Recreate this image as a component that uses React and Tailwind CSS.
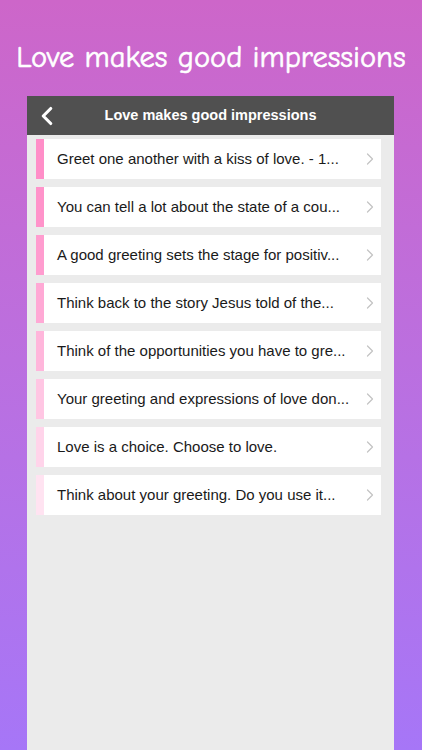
import React from "react";
import { ChevronLeft, ChevronRight } from "lucide-react";

const items = [
  { text: "Greet one another with a kiss of love. - 1...", bar: "bg-[#ff8ec8]" },
  { text: "You can tell a lot about the state of a cou...", bar: "bg-[#ff93ca]" },
  { text: "A good greeting sets the stage for positiv...", bar: "bg-[#ff9ccf]" },
  { text: "Think back to the story Jesus told of the...", bar: "bg-[#ffa9d5]" },
  { text: "Think of the opportunities you have to gre...", bar: "bg-[#ffb6db]" },
  { text: "Your greeting and expressions of love don...", bar: "bg-[#ffc6e3]" },
  { text: "Love is a choice. Choose to love.", bar: "bg-[#ffd4ea]" },
  { text: "Think about your greeting. Do you use it...", bar: "bg-[#ffe3f1]" },
];

export default function App() {
  return (
    <div className="h-[750px] overflow-hidden bg-gradient-to-b from-[#cd66c9] to-[#a676f7] flex flex-col">
      {/* Title */}
      <div className="h-[96px] flex items-center justify-center pt-[20px]">
        <h1 className="text-white text-[30.5px] font-medium font-['Comic_Sans_MS','Comic_Neue',cursive] [-webkit-text-stroke:0.6px_white]">
          Love makes good impressions
        </h1>
      </div>

      {/* Phone panel */}
      <div className="mx-[27px] w-[367px] flex-1 bg-[#ebebeb] flex flex-col">
        <div className="h-[39px] bg-[#505050] flex items-center relative">
          <ChevronLeft className="absolute left-[5px] text-white" size={30} strokeWidth={2.5} />
          <div className="flex-1 text-center text-white text-[14.5px] font-semibold font-['Liberation_Sans',sans-serif]">
            Love makes good impressions
          </div>
        </div>

        <div className="pt-[4px] pl-[9px] pr-[13px] flex flex-col gap-[8px]">
          {items.map((item, i) => (
            <div key={i} className="h-[40px] bg-white flex items-center">
              <div className={`w-[8px] h-full ${item.bar}`} />
              <div className="flex-1 pl-[13px] text-[15px] text-[#1a1a1a] font-['Liberation_Sans',sans-serif] whitespace-nowrap overflow-hidden">
                {item.text}
              </div>
              <ChevronRight className="text-[#c4c4c4] mr-[1px]" size={20} strokeWidth={1.5} />
            </div>
          ))}
        </div>
      </div>
    </div>
  );
}
